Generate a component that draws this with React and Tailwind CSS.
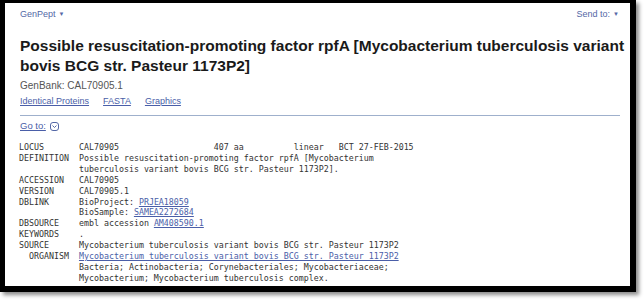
import React from "react";

const L = ({ children }) => (
  <span className="text-[#4a5ea8] underline">{children}</span>
);

export default function App() {
  return (
    <div className="w-[644px] h-[300px] bg-white relative">
      <div className="w-[636px] h-[292px] bg-black pl-[5px] pt-[3px] pr-[6px] pb-[6px] shadow-[3px_3px_4px_rgba(0,0,0,0.45)]">
        <div className="w-full h-full bg-white pl-[15px] pr-[5px] overflow-hidden" style={{ fontFamily: '"Liberation Sans", Arial, sans-serif' }}>
          <div className="flex justify-between items-center h-[12px] mt-[5px] text-[9px] leading-[12px] text-[#5468a6]">
            <span className="flex items-center gap-[3px]">GenPept<span className="text-[6px]">▼</span></span>
            <span className="flex items-center gap-[3px] mr-[6px]">Send to:<span className="text-[6px]">▼</span></span>
          </div>
          <h1 className="mt-[16px] text-[15.5px] leading-[20px] font-bold text-[#1a1a1a]">
            Possible resuscitation-promoting factor rpfA [Mycobacterium tuberculosis variant bovis BCG str. Pasteur 1173P2]
          </h1>
          <div className="mt-[4px] text-[10px] leading-[12px] text-[#555]">GenBank: CAL70905.1</div>
          <div className="mt-[3px] flex gap-[14px] text-[9px] leading-[12px]">
            <L>Identical Proteins</L>
            <L>FASTA</L>
            <L>Graphics</L>
          </div>
          <div className="mt-[8px] h-px bg-[#9fb0cc] mr-[5px]" />
          <div className="mt-[4px] flex items-center gap-[4px] text-[9.5px] leading-[12px]">
            <L>Go to:</L>
            <svg width="9" height="9" viewBox="0 0 9 9">
              <rect x="0.5" y="0.5" width="8" height="8" rx="2.5" fill="none" stroke="#5468a6" />
              <path d="M2.5 3.5 L4.5 5.5 L6.5 3.5" fill="none" stroke="#5468a6" strokeWidth="1" />
            </svg>
          </div>
          <pre className="mt-[10px] text-[8.3px] leading-[10.9px] text-[#333] ml-[-1px]" style={{ fontFamily: '"DejaVu Sans Mono", monospace' }}>
{`LOCUS       CAL70905                   407 aa          linear   BCT 27-FEB-2015
DEFINITION  Possible resuscitation-promoting factor rpfA [Mycobacterium
            tuberculosis variant bovis BCG str. Pasteur 1173P2].
ACCESSION   CAL70905
VERSION     CAL70905.1
DBLINK      BioProject: `}<L>PRJEA18059</L>{`
            BioSample: `}<L>SAMEA2272684</L>{`
DBSOURCE    embl accession `}<L>AM408590.1</L>{`
KEYWORDS    .
SOURCE      Mycobacterium tuberculosis variant bovis BCG str. Pasteur 1173P2
  ORGANISM  `}<L>Mycobacterium tuberculosis variant bovis BCG str. Pasteur 1173P2</L>{`
            Bacteria; Actinobacteria; Corynebacteriales; Mycobacteriaceae;
            Mycobacterium; Mycobacterium tuberculosis complex.`}
          </pre>
        </div>
      </div>
    </div>
  );
}
